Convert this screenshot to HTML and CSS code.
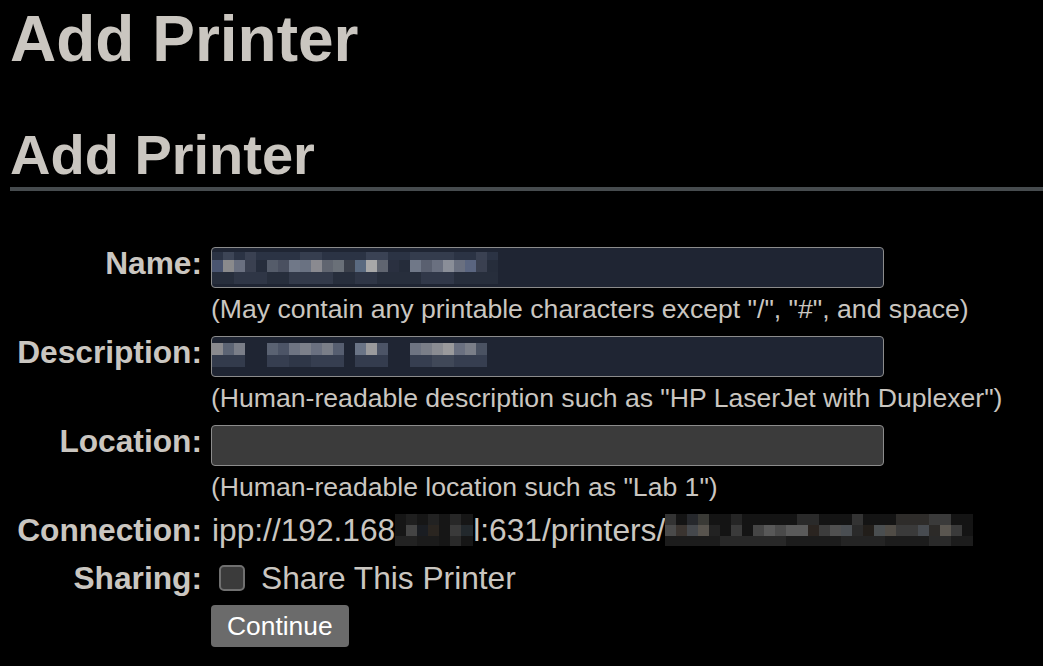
FILE: index.html
```html
<!DOCTYPE html>
<html lang="en">
<head>
<meta charset="utf-8">
<title>Add Printer</title>
<link rel="stylesheet" href="styles.css">
</head>
<body>
<div class="page">
  <h1 class="title">Add Printer</h1>
  <h2 class="section">Add Printer</h2>
  <form class="form">
    <div class="row row-field">
      <div class="label">Name:</div>
      <div class="value">
        <div class="field">
          <input class="text filled" type="text" name="PRINTER_NAME">
          <svg class="mosaic mosaic-name" width="286" height="32" viewBox="0 0 286 32" aria-hidden="true">
            <rect x="0" y="0" width="286" height="8" fill="#2b3344"/>
            <rect x="11" y="0" width="11" height="8" fill="#3d4556"/>
            <rect x="33" y="0" width="11" height="8" fill="#3a4152"/>
            <rect x="88" y="0" width="22" height="8" fill="#363e4f"/>
            <rect x="154" y="0" width="22" height="8" fill="#3a4254"/>
            <rect x="198" y="0" width="44" height="8" fill="#343c4d"/>
            <rect x="264" y="0" width="11" height="8" fill="#3a4152"/>
            <rect x="0" y="8" width="11" height="12" fill="#4a5570"/>
            <rect x="11" y="8" width="11" height="12" fill="#8a8a8c"/>
            <rect x="22" y="8" width="11" height="12" fill="#6a7080"/>
            <rect x="33" y="8" width="11" height="12" fill="#3a4050"/>
            <rect x="44" y="8" width="11" height="12" fill="#262d3c"/>
            <rect x="55" y="8" width="11" height="12" fill="#555c6a"/>
            <rect x="66" y="8" width="11" height="12" fill="#4a5060"/>
            <rect x="77" y="8" width="11" height="12" fill="#707888"/>
            <rect x="88" y="8" width="11" height="12" fill="#6a7282"/>
            <rect x="99" y="8" width="11" height="12" fill="#8a8a90"/>
            <rect x="110" y="8" width="11" height="12" fill="#606570"/>
            <rect x="121" y="8" width="11" height="12" fill="#6a7078"/>
            <rect x="132" y="8" width="11" height="12" fill="#3a3f4a"/>
            <rect x="143" y="8" width="11" height="12" fill="#5a6a80"/>
            <rect x="154" y="8" width="11" height="12" fill="#a8a8a8"/>
            <rect x="165" y="8" width="11" height="12" fill="#606570"/>
            <rect x="176" y="8" width="11" height="12" fill="#2a3040"/>
            <rect x="187" y="8" width="11" height="12" fill="#252c3a"/>
            <rect x="198" y="8" width="11" height="12" fill="#707888"/>
            <rect x="209" y="8" width="11" height="12" fill="#5a6070"/>
            <rect x="220" y="8" width="11" height="12" fill="#6a7080"/>
            <rect x="231" y="8" width="11" height="12" fill="#8a8e98"/>
            <rect x="242" y="8" width="11" height="12" fill="#6a7080"/>
            <rect x="253" y="8" width="11" height="12" fill="#5a6580"/>
            <rect x="264" y="8" width="11" height="12" fill="#3a4050"/>
            <rect x="275" y="8" width="11" height="12" fill="#262d3b"/>
            <rect x="0" y="20" width="286" height="12" fill="#272e3c"/>
            <rect x="22" y="20" width="33" height="12" fill="#2f3646"/>
            <rect x="77" y="20" width="44" height="12" fill="#333a4a"/>
            <rect x="143" y="20" width="22" height="12" fill="#2f3646"/>
            <rect x="209" y="20" width="33" height="12" fill="#313849"/>
          </svg>
        </div>
        <div class="help">(May contain any printable characters except "/", "#", and space)</div>
      </div>
    </div>

    <div class="row row-field">
      <div class="label">Description:</div>
      <div class="value">
        <div class="field">
          <input class="text filled" type="text" name="PRINTER_INFO">
          <svg class="mosaic mosaic-desc" width="286" height="24" viewBox="0 0 286 24" aria-hidden="true">
            <rect x="0" y="0" width="11" height="12" fill="#8a8a8e"/>
            <rect x="11" y="0" width="11" height="12" fill="#5c6474"/>
            <rect x="22" y="0" width="11" height="12" fill="#7a7e88"/>
            <rect x="55" y="0" width="11" height="12" fill="#5a6272"/>
            <rect x="66" y="0" width="11" height="12" fill="#4c5466"/>
            <rect x="77" y="0" width="11" height="12" fill="#6e7482"/>
            <rect x="88" y="0" width="11" height="12" fill="#7c808a"/>
            <rect x="99" y="0" width="11" height="12" fill="#6a7080"/>
            <rect x="110" y="0" width="11" height="12" fill="#7a7e88"/>
            <rect x="121" y="0" width="11" height="12" fill="#565e70"/>
            <rect x="143" y="0" width="11" height="12" fill="#6a7486"/>
            <rect x="154" y="0" width="11" height="12" fill="#9a9a9c"/>
            <rect x="165" y="0" width="11" height="12" fill="#4c5466"/>
            <rect x="198" y="0" width="11" height="12" fill="#6e7482"/>
            <rect x="209" y="0" width="11" height="12" fill="#7a7e88"/>
            <rect x="220" y="0" width="11" height="12" fill="#8a8c92"/>
            <rect x="231" y="0" width="11" height="12" fill="#9a9a9c"/>
            <rect x="242" y="0" width="11" height="12" fill="#6a7080"/>
            <rect x="253" y="0" width="11" height="12" fill="#7a7e88"/>
            <rect x="264" y="0" width="11" height="12" fill="#4a5262"/>
            <rect x="0" y="12" width="33" height="12" fill="#333b4c"/>
            <rect x="55" y="12" width="77" height="12" fill="#363e50"/>
            <rect x="77" y="12" width="22" height="12" fill="#2f3748"/>
            <rect x="143" y="12" width="33" height="12" fill="#343c4e"/>
            <rect x="198" y="12" width="77" height="12" fill="#363e50"/>
            <rect x="220" y="12" width="22" height="12" fill="#404858"/>
          </svg>
        </div>
        <div class="help">(Human-readable description such as "HP LaserJet with Duplexer")</div>
      </div>
    </div>

    <div class="row row-field">
      <div class="label">Location:</div>
      <div class="value">
        <div class="field">
          <input class="text" type="text" name="PRINTER_LOCATION">
        </div>
        <div class="help">(Human-readable location such as "Lab 1")</div>
      </div>
    </div>

    <div class="row row-line">
      <div class="label">Connection:</div>
      <div class="value conn">ipp://192.168<svg class="blur blur-ip" width="78" height="32" viewBox="0 0 78 32" aria-hidden="true">
          <rect x="0" y="0" width="78" height="32" fill="#161616"/>
          <rect x="11" y="0" width="11" height="11" fill="#1f1f1f"/>
          <rect x="33" y="0" width="11" height="11" fill="#222"/>
          <rect x="55" y="0" width="11" height="11" fill="#272727"/>
          <rect x="11" y="11" width="11" height="11" fill="#444"/>
          <rect x="22" y="11" width="11" height="11" fill="#1a1d22"/>
          <rect x="33" y="11" width="11" height="11" fill="#2a2520"/>
          <rect x="55" y="11" width="11" height="11" fill="#3a3a3a"/>
          <rect x="66" y="11" width="12" height="11" fill="#22282c"/>
          <rect x="0" y="22" width="22" height="10" fill="#222"/>
          <rect x="22" y="22" width="22" height="10" fill="#1b1b1b"/>
          <rect x="55" y="22" width="11" height="10" fill="#2a2a2a"/>
        </svg>l:631/printers/<svg class="blur blur-path" width="308" height="32" viewBox="0 0 308 32" aria-hidden="true">
          <rect x="0" y="0" width="308" height="32" fill="#141414"/>
          <rect x="0" y="0" width="11" height="11" fill="#333"/>
          <rect x="22" y="0" width="11" height="11" fill="#26282c"/>
          <rect x="33" y="0" width="11" height="11" fill="#3a3a36"/>
          <rect x="66" y="0" width="11" height="11" fill="#252525"/>
          <rect x="132" y="0" width="22" height="11" fill="#2a2a2a"/>
          <rect x="187" y="0" width="11" height="11" fill="#333"/>
          <rect x="231" y="0" width="44" height="11" fill="#2e2c2a"/>
          <rect x="264" y="0" width="22" height="11" fill="#3a3a3a"/>
          <rect x="0" y="11" width="11" height="11" fill="#4a4a4a"/>
          <rect x="11" y="11" width="11" height="11" fill="#3a3430"/>
          <rect x="22" y="11" width="11" height="11" fill="#45484c"/>
          <rect x="33" y="11" width="11" height="11" fill="#58544e"/>
          <rect x="44" y="11" width="11" height="11" fill="#222"/>
          <rect x="66" y="11" width="11" height="11" fill="#3a3a3a"/>
          <rect x="88" y="11" width="11" height="11" fill="#454545"/>
          <rect x="99" y="11" width="11" height="11" fill="#585858"/>
          <rect x="110" y="11" width="11" height="11" fill="#4a4a4a"/>
          <rect x="121" y="11" width="22" height="11" fill="#5a5a5a"/>
          <rect x="143" y="11" width="11" height="11" fill="#2a2420"/>
          <rect x="154" y="11" width="11" height="11" fill="#3c3c3c"/>
          <rect x="165" y="11" width="11" height="11" fill="#505050"/>
          <rect x="176" y="11" width="11" height="11" fill="#4a4e52"/>
          <rect x="187" y="11" width="11" height="11" fill="#2a2a2a"/>
          <rect x="198" y="11" width="11" height="11" fill="#221e1a"/>
          <rect x="209" y="11" width="11" height="11" fill="#4a4e50"/>
          <rect x="220" y="11" width="11" height="11" fill="#504c46"/>
          <rect x="231" y="11" width="22" height="11" fill="#3a3a3a"/>
          <rect x="253" y="11" width="11" height="11" fill="#474b50"/>
          <rect x="264" y="11" width="11" height="11" fill="#2c2a28"/>
          <rect x="275" y="11" width="11" height="11" fill="#5a5650"/>
          <rect x="286" y="11" width="11" height="11" fill="#3a3a3a"/>
          <rect x="0" y="22" width="308" height="10" fill="#1c1c1c"/>
          <rect x="55" y="22" width="66" height="10" fill="#282828"/>
          <rect x="176" y="22" width="44" height="10" fill="#242424"/>
          <rect x="264" y="22" width="22" height="10" fill="#2a2a2a"/>
        </svg></div>
    </div>

    <div class="row row-line">
      <div class="label">Sharing:</div>
      <div class="value">
        <label class="check"><input class="checkbox" type="checkbox" name="PRINTER_IS_SHARED"><span>Share This Printer</span></label>
      </div>
    </div>

    <div class="row row-button">
      <div class="label"></div>
      <div class="value"><button class="button" type="button">Continue</button></div>
    </div>
  </form>
</div>
</body>
</html>
```
FILE: styles.css
```css
html, body {
  margin: 0;
  padding: 0;
  background: #000;
}

body {
  font-family: "Liberation Sans", Arial, sans-serif;
  font-size: 31.7px;
  color: #cac6c0;
  overflow: hidden;
}

.page {
  padding: 2px 0 0 10px;
}

.title {
  margin: 0;
  font-size: 64px;
  font-weight: bold;
  line-height: normal;
  color: #cac6c0;
}

.section {
  margin: 46px 0 0 0;
  font-size: 56px;
  font-weight: bold;
  line-height: normal;
  color: #cac6c0;
  border-bottom: 4px solid #464b4e;
}

.form {
  display: flex;
  flex-direction: column;
  margin-top: 56px;
}

.row {
  display: flex;
  align-items: flex-start;
  column-gap: 9px;
}

.label {
  flex: 0 0 192px;
  text-align: right;
  font-weight: bold;
  line-height: normal;
  color: #cac6c0;
}

.row-field .label {
  margin-top: -2px;
}

.row-field + .row-field {
  margin-top: 11.5px;
}

.row-field + .row-line {
  margin-top: 10px;
}

.row-line + .row-line {
  margin-top: 10.6px;
}

.row-line + .row-button {
  margin-top: 8px;
}

.value {
  display: flex;
  flex-direction: column;
  align-items: flex-start;
}

.field {
  position: relative;
  width: 673px;
  height: 41px;
}

.text {
  box-sizing: border-box;
  display: block;
  width: 673px;
  height: 41px;
  margin: 0;
  padding: 0 8px;
  border: 1.5px solid #8c8c8c;
  border-radius: 4px;
  background: #3b3b3b;
  color: #cac6c0;
  font: inherit;
}

.text.filled {
  background: #1f2533;
}

.mosaic {
  position: absolute;
  left: 1px;
  display: block;
}

.mosaic-name {
  top: 5px;
}

.mosaic-desc {
  top: 7px;
}

.help {
  font-size: 26.6px;
  line-height: 30.4px;
  margin-top: 6px;
  margin-left: 0;
  color: #cac6c0;
  white-space: nowrap;
}

.conn {
  display: block;
  white-space: nowrap;
  line-height: normal;
  margin-left: 1px;
}

.blur {
  display: inline-block;
  vertical-align: -5px;
}

.check {
  display: flex;
  align-items: center;
  column-gap: 16px;
  padding-left: 8px;
  line-height: normal;
}

.checkbox {
  -webkit-appearance: none;
  appearance: none;
  box-sizing: border-box;
  width: 26px;
  height: 26px;
  margin: 0;
  border: 2px solid #707070;
  border-radius: 5px;
  background: #3b3b3b;
}

.button {
  box-sizing: border-box;
  height: 42px;
  padding: 0 16px;
  margin: 0;
  border: none;
  border-radius: 4px;
  background: #6b6b6b;
  color: #fff;
  font-family: "Liberation Sans", Arial, sans-serif;
  font-size: 26.4px;
  line-height: 30px;
}
```
